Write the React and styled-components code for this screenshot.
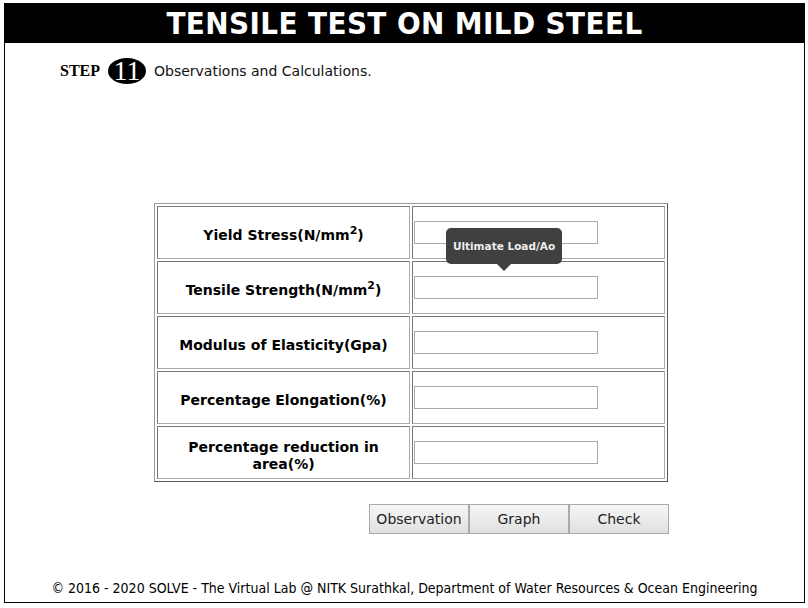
import React from 'react'
import styled, { createGlobalStyle } from 'styled-components'

const GlobalStyle = createGlobalStyle`
  html, body {
    margin: 0;
    padding: 0;
    background: #fff;
  }
`

const rows = [
  { label: <>Yield Stress(N/mm<sup>2</sup>)</>, tip: true },
  { label: <>Tensile Strength(N/mm<sup>2</sup>)</> },
  { label: 'Modulus of Elasticity(Gpa)' },
  { label: 'Percentage Elongation(%)' },
  { label: 'Percentage reduction in area(%)' },
]

const App = () => {
  return (
    <>
      <GlobalStyle />
      <Frame>
        <Header>TENSILE TEST ON MILD STEEL</Header>
        <StepRow>
          <StepWord>STEP</StepWord>
          <StepBadge>11</StepBadge>
          <StepText>Observations and Calculations.</StepText>
        </StepRow>

        <ObsTable>
          <colgroup>
            <col style={{ width: 253 }} />
            <col style={{ width: 253 }} />
          </colgroup>
          <tbody>
            {rows.map((r, i) => (
              <tr key={i}>
                <LabelCell>{r.label}</LabelCell>
                <InputCell>
                  <Field type="text" />
                  {r.tip && <Tooltip>Ultimate Load/Ao</Tooltip>}
                </InputCell>
              </tr>
            ))}
          </tbody>
        </ObsTable>

        <ButtonRow>
          <Btn>Observation</Btn>
          <Btn>Graph</Btn>
          <Btn>Check</Btn>
        </ButtonRow>

        <Footer>© 2016 - 2020 SOLVE - The Virtual Lab @ NITK Surathkal, Department of Water Resources &amp; Ocean Engineering</Footer>
      </Frame>
    </>
  )
}

const Frame = styled.div`
  margin: 3px 0 0 4px;
  width: 799px;
  height: 599px;
  border: 1px solid #000;
  border-top: none;
  display: flex;
  flex-direction: column;
  box-sizing: content-box;
`

const Header = styled.div`
  background: #000;
  color: #fff;
  height: 40px;
  margin: 0 -1px;
  display: flex;
  align-items: center;
  justify-content: center;
  font-family: 'DejaVu Sans Condensed', 'DejaVu Sans', sans-serif;
  font-weight: 700;
  font-size: 31px;
  letter-spacing: 0.4px;
`

const StepRow = styled.div`
  display: flex;
  align-items: center;
  padding: 14px 0 0 55px;
  height: 28px;
`

const StepWord = styled.span`
  font-family: 'Liberation Serif', serif;
  font-weight: 700;
  font-size: 16px;
  color: #000;
`

const StepBadge = styled.span`
  margin-left: 8px;
  width: 38px;
  height: 26px;
  border-radius: 50%;
  background: #000;
  color: #fff;
  display: flex;
  align-items: center;
  justify-content: center;
  font-family: 'Liberation Serif', serif;
  font-size: 28px;
  line-height: 1;
`

const StepText = styled.span`
  margin-left: 8px;
  font-family: 'DejaVu Sans', Verdana, sans-serif;
  font-size: 14px;
  color: #111;
`

const ObsTable = styled.table`
  margin: 118px 0 0 149px;
  width: 514px;
  table-layout: fixed;
  border-collapse: separate;
  border-spacing: 2px;
  border: 1px solid;
  border-color: #999 #555 #555 #999;
`

const LabelCell = styled.td`
  height: 53px;
  box-sizing: border-box;
  border: 1px solid;
  border-color: #777 #aaa #aaa #777;
  text-align: center;
  font-family: 'DejaVu Sans', Verdana, sans-serif;
  font-weight: 700;
  font-size: 14px;
  color: #000;
  padding: 6px 20px 0;
  line-height: 17px;

  sup {
    font-size: 11px;
    line-height: 0;
  }
`

const InputCell = styled.td`
  position: relative;
  border: 1px solid;
  border-color: #777 #aaa #aaa #777;
  padding: 0 0 0 1px;
`

const Field = styled.input`
  display: block;
  width: 184px;
  height: 23px;
  box-sizing: border-box;
  border: 1px solid #a9a9a9;
  background: #fff;
  outline: none;
`

const Tooltip = styled.div`
  position: absolute;
  left: 33px;
  top: 21px;
  width: 116px;
  height: 36px;
  border-radius: 5px;
  background: #404040;
  color: #eee;
  display: flex;
  align-items: center;
  justify-content: center;
  font-family: 'DejaVu Sans', Verdana, sans-serif;
  font-size: 10.5px;
  font-weight: 700;
  z-index: 2;

  &::after {
    content: '';
    position: absolute;
    left: 51px;
    bottom: -7px;
    border-left: 7px solid transparent;
    border-right: 7px solid transparent;
    border-top: 7px solid #404040;
  }
`

const ButtonRow = styled.div`
  display: flex;
  justify-content: flex-end;
  margin: 22px 135px 0 0;
`

const Btn = styled.button`
  width: 100px;
  height: 30px;
  margin-left: 0;
  border: 1px solid #aaa;
  background: linear-gradient(#f6f6f6, #e0e0e0);
  font-family: 'DejaVu Sans', Verdana, sans-serif;
  font-size: 14px;
  color: #222;
  cursor: pointer;
`

const Footer = styled.div`
  margin-top: auto;
  padding-bottom: 6px;
  text-align: center;
  font-family: 'DejaVu Sans Condensed', 'DejaVu Sans', sans-serif;
  font-size: 14px;
  color: #000;
`

export default App
